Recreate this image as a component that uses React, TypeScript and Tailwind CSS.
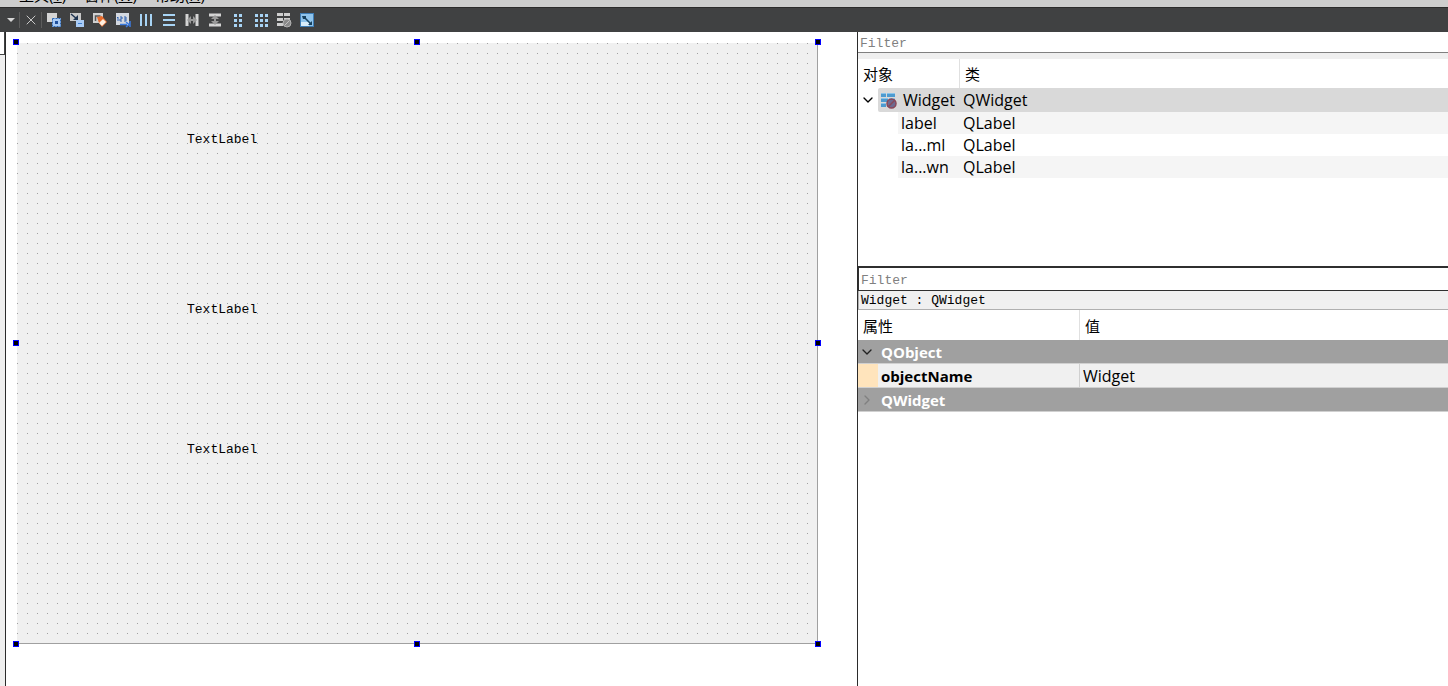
import { useState } from "react";
import type { ReactNode } from "react";
import { ChevronDown, ChevronRight, X } from "lucide-react";

const menus = [
    { label: "工具", accel: "T" },
    { label: "窗体", accel: "W" },
    { label: "帮助", accel: "H" },
];

const tools: { title: string; icon: ReactNode }[] = [
    {
        title: "Edit Widgets",
        icon: (
            <>
                <rect x="1" y="1" width="10" height="9" fill="#d4d4d4" />
                <path d="M6 6h9v9H6z" fill="#a9cbf5" />
                <path d="M6.5 6.5h8v8h-8z" fill="none" stroke="#2d66b0" strokeDasharray="2 1" />
                <rect x="9" y="9" width="3" height="3" fill="#1f4f9c" />
            </>
        ),
    },
    {
        title: "Edit Signals/Slots",
        icon: (
            <>
                <rect x="1" y="1" width="11" height="8" fill="#c8c8c8" />
                <rect x="7" y="8" width="8" height="7" fill="#a9cbf5" />
                <path d="M9 11.5h4" stroke="#3f7fd0" />
                <path d="M2 2l6 5" stroke="#1d3350" strokeWidth="1.5" />
                <path d="M9 3v5H4z" fill="#1d3350" />
            </>
        ),
    },
    {
        title: "Edit Buddies",
        icon: (
            <>
                <rect x="1" y="1" width="10" height="10" fill="#d0d0d0" />
                <path d="M3.5 9V4h5" fill="none" stroke="#555" strokeWidth="1.5" />
                <path d="M5 5l5-1 5 6-5 5-3-4z" fill="#e56b2c" />
                <path d="M11 7l3 3-4 4-3-3z" fill="#fff0e0" />
            </>
        ),
    },
    {
        title: "Edit Tab Order",
        icon: (
            <>
                <rect x="1" y="1" width="13" height="12" fill="#d3d8e0" />
                <path d="M2 6l1-1v4M5 5h2v2H5v2h2M9 5h2v4H9M9 7h2" fill="none" stroke="#2c5fae" />
                <path d="M5 12.5h7M11 10l3 2.5-3 2.5M15 9v6" fill="none" stroke="#3c7be0" strokeWidth="1.5" />
            </>
        ),
    },
    {
        title: "Lay Out Horizontally",
        icon: <path d="M3 2v12M8 2v12M13 2v12" stroke="#a8d4f5" strokeWidth="2" />,
    },
    {
        title: "Lay Out Vertically",
        icon: <path d="M2 3h12M2 8h12M2 13h12" stroke="#a8d4f5" strokeWidth="2" />,
    },
    {
        title: "Lay Out Horizontally in Splitter",
        icon: (
            <>
                <path d="M3 2v12M13 2v12" stroke="#d4d4d4" strokeWidth="3" />
                <path d="M3 8l4-4v3h2V4l4 4-4 4V9H7v3z" fill="#9a9a9a" />
            </>
        ),
    },
    {
        title: "Lay Out Vertically in Splitter",
        icon: (
            <>
                <path d="M2 3h12M2 13h12" stroke="#d4d4d4" strokeWidth="3" />
                <path d="M8 3l4 4H9v2h3l-4 4-4-4h3V7H4z" fill="#9a9a9a" />
            </>
        ),
    },
    {
        title: "Lay Out in a Form Layout",
        icon: (
            <path
                d="M4 2h3v3H4zM9 2h3v3H9zM4 7h3v3H4zM9 7h3v3H9zM4 12h3v3H4zM9 12h3v3H9z"
                fill="#a8d4f5"
            />
        ),
    },
    {
        title: "Lay Out in a Grid",
        icon: (
            <path
                d="M2 2h3v3H2zM7 2h3v3H7zM12 2h3v3h-3zM2 7h3v3H2zM7 7h3v3H7zM12 7h3v3h-3zM2 12h3v3H2zM7 12h3v3H7zM12 12h3v3h-3z"
                fill="#a8d4f5"
            />
        ),
    },
    {
        title: "Break Layout",
        icon: (
            <>
                <path d="M1 1h6v3H1zM8 1h6v3H8zM1 6h6v3H1zM8 6h6v3H8zM1 11h6v3H1z" fill="#cfcfcf" />
                <circle cx="11" cy="11" r="4" fill="#8a8a8a" stroke="#b4b4b4" />
                <path d="M8.5 13.5l5-5" stroke="#c0c0c0" />
            </>
        ),
    },
    {
        title: "Adjust Size",
        icon: (
            <>
                <rect x="1.5" y="1.5" width="13" height="13" fill="#8fc4ec" stroke="#3f7db5" />
                <rect x="2" y="10" width="8" height="4" fill="#d9edfa" />
                <path d="M5 5l7 7" stroke="#16405e" strokeWidth="1.5" />
                <path d="M3 4h4v3H4zM13 9v4H9z" fill="#16405e" />
            </>
        ),
    },
];

const labels = [
    { name: "label", short: "label", pos: "top-[89px]" },
    { name: "label_html", short: "la...ml", pos: "top-[259px]" },
    { name: "label_markdown", short: "la...wn", pos: "top-[399px]" },
];

const handles = [
    "-left-1 -top-1",
    "left-[calc(50%-3px)] -top-1",
    "-right-1 -top-1",
    "-left-1 top-[calc(50%-3px)]",
    "-right-1 top-[calc(50%-3px)]",
    "-left-1 -bottom-1",
    "left-[calc(50%-3px)] -bottom-1",
    "-right-1 -bottom-1",
];

const mono = "font-['Liberation_Mono','Noto_Sans_CJK_SC',monospace] text-[13px]";

function MenuBar() {
    return (
        <nav className="flex h-[7px] shrink-0 items-end gap-[18px] overflow-hidden bg-[#cdcdcd] pl-[19px]">
            {menus.map((m) => (
                <button key={m.accel} className="h-6 shrink-0 text-[15px] leading-6">
                    {m.label}(<span className="underline">{m.accel}</span>)
                </button>
            ))}
        </nav>
    );
}

function Toolbar() {
    return (
        <div className="flex h-[25px] shrink-0 items-center border-t border-[#2b2b2b] bg-[#404142]">
            <button aria-label="Open documents" className="flex w-[19px] justify-center pl-[2px]">
                <svg width="8" height="4" viewBox="0 0 8 4">
                    <path d="M0 0h8L4 4z" fill="#d6d6d6" />
                </svg>
            </button>
            <span className="h-4 w-px bg-[#5c5c5c]" />
            <button aria-label="Close" className="flex w-[21px] justify-center">
                <X size={16} strokeWidth={1.5} className="text-[#c8c8c8]" />
            </button>
            <span className="h-4 w-px bg-[#5c5c5c]" />
            {tools.map((tool) => (
                <button key={tool.title} title={tool.title} className="flex w-[23px] justify-center">
                    <svg width="16" height="16" viewBox="0 0 16 16">
                        {tool.icon}
                    </svg>
                </button>
            ))}
        </div>
    );
}

function FormCanvas() {
    return (
        <main className="min-w-0 flex-1 overflow-hidden border-l border-[#2b2b2b] bg-white pl-[11px] pt-[11px]">
            {/* form being designed, 10px snap grid */}
            <div className="relative h-[601px] w-[801px] border-b border-r border-[#a0a0a0] bg-[linear-gradient(to_right,transparent_1px,#f0f0f0_1px),linear-gradient(#a0a0a0_1px,#f0f0f0_1px)] bg-[size:10px_10px]">
                {labels.map((l) => (
                    <span key={l.name} className={`absolute left-[170px] leading-4 text-black ${l.pos} ${mono}`}>
                        TextLabel
                    </span>
                ))}
                {handles.map((h) => (
                    <span key={h} className={`absolute size-[6px] border border-[#0000ff] bg-black ${h}`} />
                ))}
            </div>
        </main>
    );
}

function ObjectIcon() {
    return (
        <svg width="17" height="17" viewBox="0 0 17 17" className="shrink-0">
            <path d="M1 1h5v4H1zM7 1h8v4H7zM1 6h7v4H1zM9 6h6v4H9zM1 11h5v4H1zM7 11h6v4H7z" fill="#4d9bd0" />
            <path d="M1 1h5v1H1zM7 1h8v1H7zM1 6h7v1H1zM9 6h6v1H9zM1 11h5v1H1z" fill="#8ac4ea" />
            <circle cx="11.5" cy="11.5" r="4.5" fill="#6d6a90" stroke="#8a4757" strokeWidth="1.5" />
            <path d="M8.5 14.5l6-6" stroke="#8a4757" strokeWidth="1.5" />
        </svg>
    );
}

function ObjectInspector() {
    const [open, setOpen] = useState(true);

    return (
        <section className="flex h-[234px] shrink-0 flex-col">
            <input
                aria-label="Filter objects"
                placeholder="Filter"
                className={`h-[21px] w-full shrink-0 border-b border-[#808080] bg-white px-[2px] pt-[2px] outline-none placeholder:text-[#808080] ${mono}`}
            />
            <div className="h-[6px] shrink-0 bg-[#efefef]" />
            <table className="w-full table-fixed border-separate border-spacing-0 text-left">
                <colgroup>
                    <col className="w-[102px]" />
                    <col />
                </colgroup>
                <thead>
                    <tr className="h-[29px] text-[15px]">
                        <th className="border-r border-[#e0e0e0] p-0 pl-[5px] pt-[2px] font-normal">对象</th>
                        <th className="p-0 pl-[5px] pt-[2px] font-normal">类</th>
                    </tr>
                </thead>
                <tbody className="whitespace-nowrap text-base leading-[22px]">
                    <tr>
                        <td className="p-0">
                            <div className="flex h-6 items-center">
                                <button
                                    aria-label="Toggle Widget"
                                    onClick={() => setOpen(!open)}
                                    className="flex w-5 shrink-0 justify-center"
                                >
                                    {open ? <ChevronDown size={16} /> : <ChevronRight size={16} />}
                                </button>
                                <div className="flex h-6 flex-1 items-center gap-[6px] rounded-l-xs bg-[#d9d9d9] pl-[2px]">
                                    <ObjectIcon />
                                    Widget
                                </div>
                            </div>
                        </td>
                        <td className="bg-[#d9d9d9] p-0 pl-[3px]">QWidget</td>
                    </tr>
                    {open &&
                        labels.map((l, i) => (
                            <tr key={l.name} title={l.name} className="h-[22px]">
                                <td className="p-0 pl-10">
                                    <div className={`pl-[3px] ${i % 2 ? "bg-white" : "bg-[#f5f5f5]"}`}>{l.short}</div>
                                </td>
                                <td className={`p-0 pl-[3px] ${i % 2 ? "bg-white" : "bg-[#f5f5f5]"}`}>QLabel</td>
                            </tr>
                        ))}
                </tbody>
            </table>
        </section>
    );
}

function PropertyEditor() {
    return (
        <section className="flex flex-1 flex-col">
            <input
                aria-label="Filter properties"
                placeholder="Filter"
                className={`h-[25px] w-full shrink-0 border-b border-l border-t-2 border-[#2f2f2f] bg-white px-[2px] pt-[2px] outline-none placeholder:text-[#808080] ${mono}`}
            />
            <div
                className={`h-[19px] shrink-0 border-b border-l border-[#b0b0b0] bg-[#f0f0f0] pl-[2px] leading-5 text-black ${mono}`}
            >
                Widget : QWidget
            </div>
            <table className="w-full table-fixed border-separate border-spacing-0 text-left leading-[22px]">
                <colgroup>
                    <col className="w-[222px]" />
                    <col />
                </colgroup>
                <thead>
                    <tr className="h-[30px] text-[15px]">
                        <th className="border-r border-[#e0e0e0] p-0 pl-[5px] pt-[2px] font-normal">属性</th>
                        <th className="p-0 pl-[5px] pt-[2px] font-normal">值</th>
                    </tr>
                </thead>
                <tbody>
                    <tr className="h-6 bg-[#a0a0a0]">
                        <th colSpan={2} className="border-b border-[#d0d0d0] p-0 font-bold text-white">
                            <button className="flex items-center gap-[6px] pl-px">
                                <ChevronDown size={16} className="text-[#222]" />
                                QObject
                            </button>
                        </th>
                    </tr>
                    <tr className="h-6 bg-[#f0f0f0]">
                        <th className="border-b border-r border-[#d0d0d0] p-0 font-bold">
                            <div className="flex items-center gap-[3px]">
                                <span className="h-[23px] w-5 bg-[#ffe4bc]" />
                                objectName
                            </div>
                        </th>
                        <td className="border-b border-[#d0d0d0] p-0 pl-[3px] text-base leading-[22px]">Widget</td>
                    </tr>
                    <tr className="h-6 bg-[#a0a0a0]">
                        <th colSpan={2} className="border-b border-[#d0d0d0] p-0 font-bold text-white">
                            <button className="flex items-center gap-[6px] pl-px">
                                <ChevronRight size={16} className="text-[#808080]" />
                                QWidget
                            </button>
                        </th>
                    </tr>
                </tbody>
            </table>
        </section>
    );
}

export default function App() {
    return (
        <div className="flex h-screen flex-col overflow-hidden bg-white font-['Open_Sans','Noto_Sans_CJK_SC',sans-serif] text-[15px] text-black">
            <MenuBar />
            <Toolbar />
            <div className="flex min-h-0 flex-1">
                <div className="w-[5px] shrink-0 bg-[#efefef]">
                    <div className="h-[23px] border-b border-r border-[#404142] bg-white" />
                </div>
                <FormCanvas />
                <aside className="flex w-[591px] shrink-0 flex-col border-l border-[#2b2b2b]">
                    <ObjectInspector />
                    <PropertyEditor />
                </aside>
            </div>
        </div>
    );
}
